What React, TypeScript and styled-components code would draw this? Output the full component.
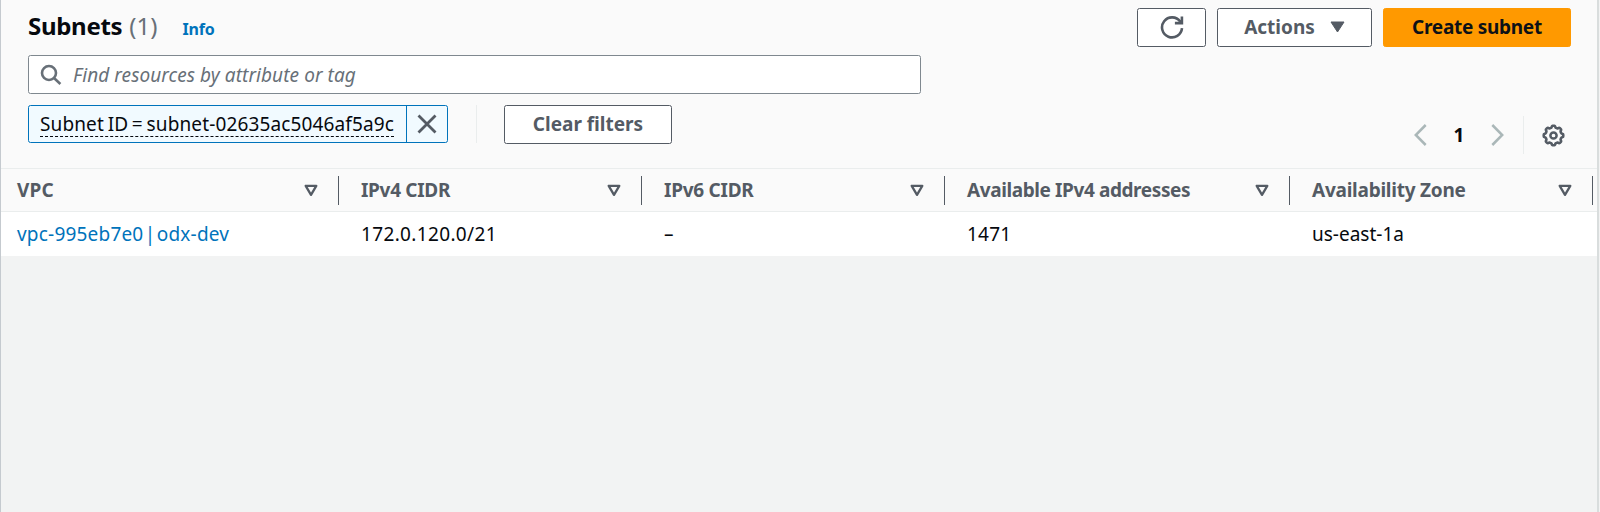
import React from 'react';
import styled, { createGlobalStyle } from 'styled-components';

const color = {
  ink: '#06090e',
  slate: '#545b64',
  gray: '#687078',
  link: '#0073bb',
  line: '#eaeded',
  surface: '#fafafa',
  canvas: '#f2f3f3',
  disabled: '#aab7b8',
};

const GlobalStyle = createGlobalStyle`
  * { box-sizing: border-box; }
  body {
    margin: 0;
    overflow: hidden;
    background: ${color.canvas};
    color: ${color.ink};
    font: 400 19px/24px "Noto Sans", sans-serif;
  }
`;

const Label = styled.span<{ $spacing?: number; $word?: number }>`
  letter-spacing: ${(p) => p.$spacing ?? 0}px;
  word-spacing: ${(p) => p.$word ?? 0}px;
  white-space: nowrap;
`;

const Panel = styled.main`
  display: flex;
  flex-direction: column;
  width: 1599px;
  height: 512px;
  border-left: 1px solid #c5cacf;
  border-right: 2px solid #d9dddd;
`;

const Header = styled.header`
  display: flex;
  flex-direction: column;
  height: 169px;
  padding: 8px 26px 0 27px;
  background: ${color.surface};
  border-bottom: 1px solid ${color.line};
`;

const TitleBar = styled.div`
  display: flex;
  justify-content: space-between;
  height: 39px;
`;

const Title = styled.h2`
  display: flex;
  align-items: baseline;
  margin: 0;
  font-size: 24px;
  line-height: 36px;
`;

const Counter = styled.span`
  margin-left: 7px;
  color: ${color.gray};
  font-weight: 400;
`;

const InfoLink = styled.a`
  margin-left: 25px;
  color: ${color.link};
  font-size: 16px;
  font-weight: 700;
  letter-spacing: -0.2px;
`;

const ButtonGroup = styled.div`
  display: flex;
  gap: 11px;
`;

const Button = styled.button<{ $width: number; $primary?: boolean }>`
  display: flex;
  align-items: center;
  justify-content: center;
  width: ${(p) => p.$width}px;
  height: 39px;
  padding: 0 0 1px;
  border: 1px solid ${(p) => (p.$primary ? '#ff9900' : color.slate)};
  border-radius: 2.5px;
  background: ${(p) => (p.$primary ? '#ff9900' : '#fff')};
  color: ${(p) => (p.$primary ? '#0d1117' : color.slate)};
  font: 700 19px/24px "Noto Sans", sans-serif;
`;

const Caret = styled.svg`
  width: 15px;
  height: 12px;
  margin: 0 0 0 15px;
`;

const SearchBox = styled.label`
  display: flex;
  align-items: center;
  width: 893px;
  height: 39px;
  margin-top: 8px;
  padding: 0 11px;
  gap: 11px;
  border: 1px solid #7f888f;
  border-radius: 2.5px;
  background: #fff;
  color: ${color.gray};
  font-style: italic;
`;

const Tools = styled.div`
  display: flex;
  justify-content: space-between;
  margin-top: 11px;
`;

const Filters = styled.div`
  display: flex;
  align-items: center;
  height: 38px;
`;

const Token = styled.div`
  display: flex;
  width: 420px;
  height: 38px;
  border: 1px solid ${color.link};
  border-radius: 2.5px;
  background: #f1faff;
`;

const TokenText = styled.div`
  display: flex;
  align-items: center;
  width: 378px;
  padding-left: 11px;
  border-right: 1px solid ${color.link};
`;

const TokenLabel = styled(Label)`
  height: 25px;
  line-height: 24px;
  border-bottom: 1px dashed ${color.ink};
`;

const TokenDismiss = styled.div`
  display: grid;
  flex: 1;
  place-items: center;
`;

const Divider = styled.i<{ $left: number; $right: number }>`
  width: 1px;
  height: 38px;
  margin: 0 ${(p) => p.$right}px 0 ${(p) => p.$left}px;
  background: ${color.line};
`;

const Pagination = styled.div`
  display: flex;
  align-items: center;
  height: 38px;
  margin: 11px 6px 0 0;
`;

const PageNumber = styled.b`
  width: 64px;
  padding-bottom: 1px;
  text-align: center;
`;

const Row = styled.div`
  display: grid;
  grid-template-columns: 338px 303px 303px 345px 303px 1fr;
`;

const HeadRow = styled(Row)`
  height: 43px;
  padding-top: 7px;
  background: ${color.surface};
  border-bottom: 1px solid ${color.line};
`;

const HeadCell = styled.div<{ $first?: boolean }>`
  display: flex;
  align-items: center;
  justify-content: space-between;
  height: 29px;
  padding: 0 20px 1px ${(p) => (p.$first ? 16 : 22)}px;
  border-right: 1px solid ${color.slate};
  color: ${color.slate};
  font-weight: 700;
`;

const BodyRow = styled(Row)`
  height: 44px;
  background: #fff;
`;

const Cell = styled.div<{ $first?: boolean }>`
  display: flex;
  align-items: center;
  padding-left: ${(p) => (p.$first ? 16 : 22)}px;
`;

const VpcLink = styled(Label)`
  color: ${color.link};
`;

const columns = [
  { title: 'VPC', spacing: 0.2 },
  { title: 'IPv4 CIDR', spacing: -0.3 },
  { title: 'IPv6 CIDR', spacing: -0.25 },
  { title: 'Available IPv4 addresses', spacing: -0.4 },
  { title: 'Availability Zone', spacing: -0.24 },
];

const SortIcon = () => (
  <svg width="14" height="13" viewBox="0 0 14 13">
    <path d="M1.7 1.8h10.6L7 10.8z" fill="none" stroke={color.slate} strokeWidth="2.3" strokeLinejoin="round" />
  </svg>
);

const SearchIcon = () => (
  <svg width="22" height="22" viewBox="0 0 22 22" fill="none" stroke={color.gray} strokeWidth="2.6">
    <circle cx="9" cy="9" r="7" />
    <path d="m14 14 6.4 6" />
  </svg>
);

const RefreshIcon = () => (
  <svg width="24" height="24" viewBox="0 0 24 24" fill="none" stroke={color.slate} strokeWidth="2.6">
    <path d="M22 13.2A10 10 0 1 1 20.2 6.6" />
    <path d="M21.9 1.6v6.5h-7" />
    <path d="M17.5 8.5 22 4v4.5z" fill={color.slate} stroke="none" />
  </svg>
);

const CloseIcon = () => (
  <svg width="20" height="20" viewBox="0 0 20 20" stroke={color.slate} strokeWidth="2.8">
    <path d="m1.5 1.5 17 17m0-17-17 17" />
  </svg>
);

const ArrowIcon = ({ d }: { d: string }) => (
  <svg width="13" height="22" viewBox="0 0 13 22" fill="none" stroke={color.disabled} strokeWidth="2.5">
    <path d={d} />
  </svg>
);

const gearOutline = Array.from({ length: 96 }, (_, i) => {
  const a = (i / 96) * Math.PI * 2;
  const r = 8.9 + 0.9 * Math.tanh(2.2 * Math.cos(8 * a));
  return `${(11.5 + r * Math.sin(a)).toFixed(2)},${(11.5 - r * Math.cos(a)).toFixed(2)}`;
}).join(' ');

const GearIcon = () => (
  <svg width="23" height="23" viewBox="0 0 23 23" fill="none" stroke={color.slate}>
    <polygon points={gearOutline} strokeWidth="2.6" strokeLinejoin="round" />
    <circle cx="11.5" cy="11.5" r="3.1" strokeWidth="2.5" />
  </svg>
);

export default function App() {
  return (
    <>
      <GlobalStyle />
      <Panel>
        <Header>
          <TitleBar>
            <Title>
              <Label $spacing={-0.3}>Subnets</Label>
              <Counter>(1)</Counter>
              <InfoLink>Info</InfoLink>
            </Title>
            <ButtonGroup>
              <Button $width={69} aria-label="Refresh"><RefreshIcon /></Button>
              <Button $width={155}>
                <Label>Actions</Label>
                <Caret viewBox="0 0 15 12"><path d="M1 1h13L7.5 11z" fill={color.slate} stroke={color.slate} strokeLinejoin="round" /></Caret>
              </Button>
              <Button $width={188} $primary><Label $spacing={-0.28}>Create subnet</Label></Button>
            </ButtonGroup>
          </TitleBar>
          <SearchBox>
            <SearchIcon />
            <Label $spacing={0.08}>Find resources by attribute or tag</Label>
          </SearchBox>
          <Tools>
            <Filters>
              <Token>
                <TokenText><TokenLabel $spacing={0.13} $word={-1.4}>Subnet ID = subnet-02635ac5046af5a9c</TokenLabel></TokenText>
                <TokenDismiss><CloseIcon /></TokenDismiss>
              </Token>
              <Divider $left={28} $right={27} />
              <Button $width={168}><Label>Clear filters</Label></Button>
            </Filters>
            <Pagination>
              <ArrowIcon d="M11.7 1 1.8 11l9.9 10" />
              <PageNumber>1</PageNumber>
              <ArrowIcon d="m1.3 1 9.9 10-9.9 10" />
              <Divider $left={19} $right={18} />
              <GearIcon />
            </Pagination>
          </Tools>
        </Header>
        <HeadRow>
          {columns.map((c, i) => (
            <HeadCell key={c.title} $first={i === 0}>
              <Label $spacing={c.spacing}>{c.title}</Label>
              <SortIcon />
            </HeadCell>
          ))}
        </HeadRow>
        <BodyRow>
          <Cell $first><VpcLink $spacing={0.2} $word={-3.8}>vpc-995eb7e0 | odx-dev</VpcLink></Cell>
          <Cell><Label $spacing={0.35}>172.0.120.0/21</Label></Cell>
          <Cell>–</Cell>
          <Cell><Label $spacing={0.2}>1471</Label></Cell>
          <Cell><Label>us-east-1a</Label></Cell>
        </BodyRow>
      </Panel>
    </>
  );
}
